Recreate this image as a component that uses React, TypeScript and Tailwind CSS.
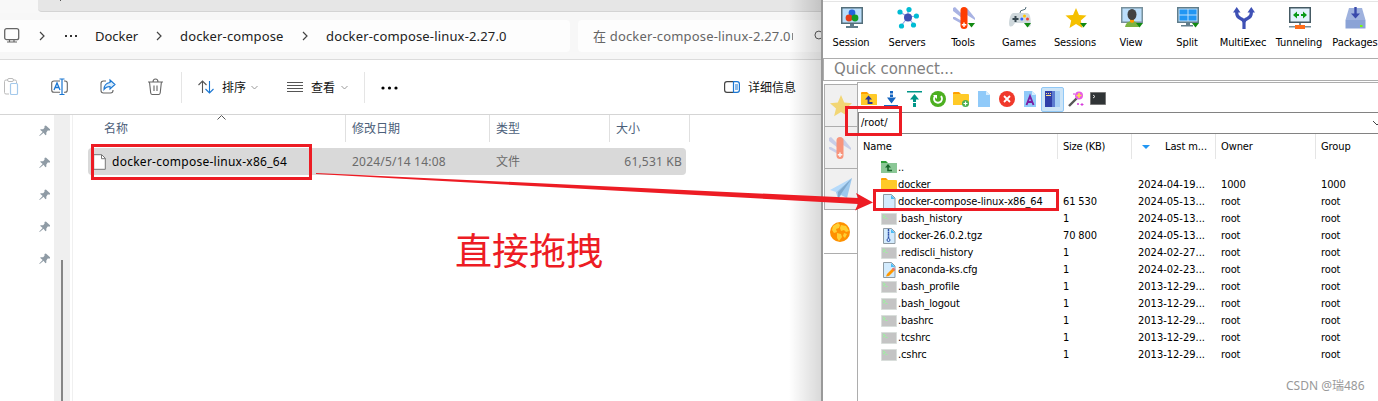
import React from "react";

const SORTS = {
  name: "名称",
  date: "修改日期",
  type: "类型",
  size: "大小",
};

interface RemoteFile {
  icon: "up" | "folder" | "file" | "hidden" | "zip" | "edit";
  name: string;
  size?: string;
  date?: string;
  owner?: string;
  group?: string;
}

const files: RemoteFile[] = [
  { icon: "up", name: ".." },
  { icon: "folder", name: "docker", date: "2024-04-19...", owner: "1000", group: "1000" },
  { icon: "file", name: "docker-compose-linux-x86_64", size: "61 530", date: "2024-05-13...", owner: "root", group: "root" },
  { icon: "hidden", name: ".bash_history", size: "1", date: "2024-05-13...", owner: "root", group: "root" },
  { icon: "zip", name: "docker-26.0.2.tgz", size: "70 800", date: "2024-05-13...", owner: "root", group: "root" },
  { icon: "hidden", name: ".rediscli_history", size: "1", date: "2024-02-27...", owner: "root", group: "root" },
  { icon: "edit", name: "anaconda-ks.cfg", size: "1", date: "2024-02-23...", owner: "root", group: "root" },
  { icon: "hidden", name: ".bash_profile", size: "1", date: "2013-12-29...", owner: "root", group: "root" },
  { icon: "hidden", name: ".bash_logout", size: "1", date: "2013-12-29...", owner: "root", group: "root" },
  { icon: "hidden", name: ".bashrc", size: "1", date: "2013-12-29...", owner: "root", group: "root" },
  { icon: "hidden", name: ".tcshrc", size: "1", date: "2013-12-29...", owner: "root", group: "root" },
  { icon: "hidden", name: ".cshrc", size: "1", date: "2013-12-29...", owner: "root", group: "root" },
];

const FileIcon: React.FC<{ kind: RemoteFile["icon"] }> = ({ kind }) => {
  if (kind === "up") {
    return (
      <svg width="16" height="16" viewBox="0 0 16 16">
        <path d="M0 4V1h5l2 2z" fill="#2f9e3a" />
        <path d="M0 3h16v10H0z" fill="#8bc796" />
        <path d="M7 6v4.500h4" stroke="#17652a" strokeWidth="1.600" fill="none" />
        <path d="M4 7.500L7 4l3 3.500z" fill="#17652a" />
      </svg>
    );
  }
  if (kind === "folder") {
    return (
      <svg width="16" height="16" viewBox="0 0 16 16">
        <path d="M0 4V2q0-1 1-1h4l2 2z" fill="#ffa000" />
        <path d="M0 3h15q1 0 1 1v9q0 1-1 1H1q-1 0-1-1z" fill="#ffca28" />
      </svg>
    );
  }
  if (kind === "hidden") {
    return (
      <svg width="16" height="16" viewBox="0 0 16 16">
        <path d="M.5 2.500h15v11H.5z" fill="#c4c4c4" stroke="#d9dedb" />
        <path d="M2 4l2 1.500L2 7M4.500 7.500h2" stroke="#9df0a0" strokeWidth="1.200" fill="none" />
      </svg>
    );
  }
  return (
    <svg width="16" height="16" viewBox="0 0 16 16">
      <path d="M2.500.5h8l3.500 3.500v11.500h-11.500z" fill="#d3ebfd" stroke="#8f9ba3" />
      <path d="M10 1l4 4h-4z" fill="#4ebdf5" />
      {kind === "zip" && <path d="M7.500 1v9" stroke="#2c4fa8" strokeWidth="1.500" strokeDasharray="2 .4" />}
      {kind === "zip" && <circle cx="7.500" cy="12" r="1.500" fill="none" stroke="#2c4fa8" />}
      {kind === "edit" && <path d="M5 14.500l1-2.500 6-6 2 2-6 6z" fill="#ff9800" />}
      {kind === "edit" && <path d="M11 7l1.500-1.500 2 2L13 9z" fill="#e57373" />}
    </svg>
  );
};

const Chevron: React.FC<{ className: string }> = ({ className }) => (
  <svg width="8" height="12" viewBox="0 0 8 12" className={className}>
    <path d="M2 2l4 4-4 4" fill="none" stroke="#444" strokeWidth="1.200" />
  </svg>
);

const Down: React.FC = () => (
  <svg width="7" height="5" viewBox="0 0 7 5">
    <path d="M.5 1l3 3 3-3" fill="none" stroke="#999" />
  </svg>
);

const Pin: React.FC = () => (
  <svg width="11" height="12" viewBox="0 0 12 12">
    <path d="M6 .5L7.500 0 12 4v1.500H9.500L8 7.500v2.500L7 10.500 5 8 .8 11.500 .3 11 4 7 1.500 5V4H4.500L6 2.500z" fill="#8f9ba5" />
  </svg>
);

const Star: React.FC<{ size: number }> = ({ size }) => (
  <svg width={size} height={size} viewBox="0 0 22 22">
    <path d="M11 0l3.200 7.500 7.800.7-6 5.200 1.900 7.900-6.900-4.300-6.900 4.300L6 13.400 0 8.200l7.800-.7z" fill="#f5c211" />
  </svg>
);

const Knife: React.FC = () => (
  <svg width="22" height="22" viewBox="0 0 22 22">
    <path d="M0 1l2-1 7 7v4L0 4zM0 10l2 0 7 4v3L0 12zM14 1l8 10v2l-8-5z" fill="#a9b3e3" />
    <rect x="7.500" y="0" width="7" height="22" rx="3.500" fill="#ff4a1c" />
    <path d="M11 15.500v4.500M8.800 17.700h4.500" stroke="#fff" strokeWidth="1.400" />
  </svg>
);

const green = <path d="M15 16h7l-3.500 4.500z" fill="#128a12" />;

const tools = [
  {
    label: "Session",
    art: (
      <>
        <path d="M0 0h22v17H0z" fill="#546e7a" />
        <path d="M1.500 1.500h19v14h-19z" fill="#bbdefb" />
        <path d="M9 17h4v3H9zM5 19h12v2H5z" fill="#607d8b" />
        <circle cx="11" cy="6" r="3.400" fill="#2464dc" />
        <circle cx="8" cy="11" r="3.400" fill="#e63d18" />
        <circle cx="14" cy="11" r="3.400" fill="#159c24" />
      </>
    ),
  },
  {
    label: "Servers",
    art: (
      <>
        <path d="M11 10L3 5M11 10l0-8M11 10l9-1M11 10l-7 9M11 10l6 8" stroke="#90a4e8" strokeWidth="1.200" />
        <circle cx="11" cy="10.500" r="4" fill="#3f51b5" />
        <circle cx="3" cy="5" r="2.600" fill="#00bcd4" />
        <circle cx="12" cy="2.600" r="2.600" fill="#00bcd4" />
        <circle cx="19.400" cy="9" r="2.600" fill="#00bcd4" />
        <circle cx="4.500" cy="19" r="2.600" fill="#00bcd4" />
        <circle cx="16.500" cy="18" r="2.600" fill="#00bcd4" />
      </>
    ),
  },
  {
    label: "Tools",
    art: (
      <>
        <path d="M0 1l2-1 7 7v4L0 4zM0 10l2 0 7 4v3L0 12zM14 1l8 10v2l-8-5z" fill="#a9b3e3" />
        <rect x="7.500" y="0" width="7" height="22" rx="3.500" fill="#ff3d00" />
        <path d="M11 15.500v4.500M8.800 17.700h4.500" stroke="#fff" strokeWidth="1.400" />
        {green}
      </>
    ),
  },
  {
    label: "Games",
    art: (
      <>
        <path d="M11 6q0-3 3-3t3-3" stroke="#546e7a" fill="none" />
        <path d="M4 6h14q3 0 3.500 6t0 7q-3 3-5-3H6q-3 5-5.500 3-1-2 0-7T4 6z" fill="#cfd8dc" />
        <path d="M6.500 9v6M3.500 12h6" stroke="#37474f" strokeWidth="2" />
        <circle cx="15.500" cy="9" r="1.500" fill="#ffc400" />
        <circle cx="12.800" cy="12" r="1.500" fill="#2962ff" />
        <circle cx="18.500" cy="12" r="1.500" fill="#f44336" />
        {green}
      </>
    ),
  },
  {
    label: "Sessions",
    art: (
      <>
        <path d="M11 1l3 7 7.500.6-5.700 5 1.700 7.400L11 17l-6.500 4 1.700-7.400-5.700-5L8 8z" fill="#f5c000" />
        {green}
      </>
    ),
  },
  {
    label: "View",
    art: (
      <>
        <path d="M0 0h22v16H0z" fill="#78909c" />
        <path d="M1.500 1.500h19v13h-19z" fill="#bbdefb" />
        <path d="M4 20q1-6 7-6t7 6z" fill="#7cb342" />
        <path d="M9 11h4v4l-2 1-2-1z" fill="#ff9800" />
        <ellipse cx="11" cy="7.500" rx="4.500" ry="5.500" fill="#424242" />
        {green}
      </>
    ),
  },
  {
    label: "Split",
    art: (
      <>
        <path d="M0 0h22v16H0z" fill="#607d8b" />
        <path d="M1.500 1.500h19v13h-19z" fill="#bbdefb" />
        <path d="M2.500 2.500h8v5h-8zM11.500 2.500h8v5h-8zM2.500 8.500h8v5h-8zM11.500 8.500h8v5h-8z" fill="#2196f3" />
        <path d="M9 16h4v2H9zM4 18h12v1.500H4z" fill="#607d8b" />
        {green}
      </>
    ),
  },
  {
    label: "MultiExec",
    art: (
      <>
        <path d="M3.700 4v2q0 4 3.800 5.500T11 16M18.300 4v2q0 4-3.800 5.500T11 16M11 13v9" stroke="#3f51b5" strokeWidth="3.200" fill="none" />
        <path d="M0 5.500L3.700 0 7.500 5.500zM14.500 5.500L18.300 0 22 5.500z" fill="#3f51b5" />
      </>
    ),
  },
  {
    label: "Tunneling",
    art: (
      <>
        <path d="M0 0h22v16H0z" fill="#455a64" />
        <path d="M1.500 1.500h19v13h-19z" fill="#e3f2fd" />
        <path d="M4 8l4-3.500v2.500h2v2H8v2.500zM18 8l-4-3.500v2.500h-2v2h2v2.500z" fill="#0a9b18" />
        <path d="M10 16h2v2h-2zM0 19h22v1.500H0z" fill="#78909c" />
        <path d="M6 18h10v4H6z" fill="#ff6d1a" />
      </>
    ),
  },
  {
    label: "Packages",
    art: (
      <>
        <path d="M4 1h13l3.500 12H.5z" fill="#9fb2de" />
        <path d="M.5 13h20v8.500H.5z" fill="#8ba3d6" />
        <path d="M10.500 0v8" stroke="#3949ab" strokeWidth="2.400" />
        <path d="M6 6.500h9l-4.500 5z" fill="#3949ab" />
        <path d="M15 18h2.500v2H15z" fill="#76ff03" />
      </>
    ),
  },
];

const folder = (
  <>
    <path d="M0 4V2q0-1 1-1h5l2 2z" fill="#ffa000" />
    <path d="M0 3h15q1 0 1 1v10H0z" fill="#ffca28" />
  </>
);

const sheet = (
  <>
    <path d="M2 0h8l4 4v12H2z" fill="#90caf9" />
    <path d="M10 0v4h4z" fill="#d8eefe" />
  </>
);

const actions = [
  <>
    {folder}
    <path d="M7.500 7v5h4" stroke="#283593" strokeWidth="1.800" fill="none" />
    <path d="M4 8.500L7.500 4.500 11 8.500z" fill="#283593" />
  </>,
  <>
    <path d="M7.500 0v9" stroke="#1565c0" strokeWidth="3" strokeDasharray="2.500 1" />
    <path d="M3 6.500h9l-4.500 6zM0 14h14v1.500H0z" fill="#1565c0" />
  </>,
  <>
    <path d="M7.500 7v9" stroke="#009688" strokeWidth="3" strokeDasharray="4 1" />
    <path d="M3 8.500h9L7.500 3zM0 0h15v1.500H0z" fill="#009688" />
  </>,
  <>
    <circle cx="8" cy="8" r="8" fill="#4caf20" />
    <path d="M5 5q-2 3 0 5.500 3 2.500 6 0 2-3 0-5.500" stroke="#fff" strokeWidth="1.800" fill="none" />
    <path d="M3 4h4v4z" fill="#fff" />
  </>,
  <>
    {folder}
    <circle cx="12.500" cy="12.500" r="3.500" fill="#4caf50" />
    <path d="M12.500 10.500v4M10.500 12.500h4" stroke="#fff" strokeWidth="1.200" />
  </>,
  sheet,
  <>
    <circle cx="8" cy="8" r="8" fill="#f0392b" />
    <path d="M5 5l6 6M11 5l-6 6" stroke="#fff" strokeWidth="1.800" />
  </>,
  <>
    {sheet}
    <path d="M4.500 14L8 5l3.500 9M6 11h4" stroke="#7b1fa2" strokeWidth="1.900" fill="none" />
  </>,
  <>
    <path d="M0 0h7v16H0z" fill="#303fa8" />
    <path d="M7 0h3v16H7z" fill="#5c7bd0" />
    <path d="M10 0h5v16h-5z" fill="#a5cdf5" />
    <path d="M1 2h1v1H1zM3 2h1v1H3zM5 2h1v1H5zM1 4h5v1H1z" fill="#ffe082" />
  </>,
  <>
    <path d="M1 15l8-8" stroke="#555" strokeWidth="2.400" />
    <circle cx="11" cy="4.500" r="4" fill="#e65be8" />
    <path d="M11 2v5M8.500 4.500h5" stroke="#ffe14a" strokeWidth="1.500" />
    <path d="M14 12v3M12.500 13.500h3M10 12v2M9 13h2M5 3h2" stroke="#d63bdc" />
  </>,
  <>
    <path d="M.5 1.500h15v12H.5z" fill="#303436" stroke="#777" />
    <path d="M3 4l2 1.500L3 7" stroke="#ddd" fill="none" />
  </>,
];

const Explorer: React.FC = () => (
  <div className="relative flex h-full w-[821px] shrink-0 flex-col overflow-hidden bg-white font-['Noto_Sans','Noto_Sans_CJK_SC',sans-serif] text-[13px] text-[#222]">
    <div className="h-[13px] bg-[#f8f8f8] pl-[38px]">
      <div className="h-3 rounded-bl border-b border-[#d4d4d4] bg-[#e6e6e6] pl-[22px]">
        <div className="h-px w-px bg-[#555]" />
      </div>
    </div>
    <div className="flex h-[47px] border-b border-[#dcdcdc] bg-[#f7f7f7] pt-[7px]">
      <div className="mr-2 flex h-8 w-[570px] items-center rounded-r bg-[#fdfdfd] whitespace-nowrap">
        <svg width="16" height="16" viewBox="0 0 16 16" className="ml-1">
          <rect x=".7" y=".7" width="14" height="11" rx="2" fill="none" stroke="#666" strokeWidth="1.300" />
          <path d="M5.500 12v2M10 12v2M3 14h10" stroke="#666" strokeWidth="1.200" />
        </svg>
        <Chevron className="ml-[18px]" />
        <svg width="12" height="4" viewBox="0 0 12 4" className="mb-px ml-[19px]">
          <path d="M0 1h2v2H0zM5 1h2v2H5zM10 1h2v2h-2z" fill="#333" />
        </svg>
        <span className="ml-[18px] w-[44px] pt-px">Docker</span>
        <Chevron className="ml-4" />
        <span className="ml-[17px] w-[104px] pt-px tracking-[0.14px]">docker-compose</span>
        <Chevron className="ml-[17px]" />
        <span className="ml-[17px] pt-px tracking-[0.16px]">docker-compose-linux-2.27.0</span>
      </div>
      <div className="flex h-8 w-[243px] items-center rounded-l bg-[#fdfdfd] whitespace-nowrap text-[#666]">
        <span className="ml-[15px] w-[203px] overflow-hidden pt-px tracking-[0.17px]">在 docker-compose-linux-2.27.0</span>
        <span className="h-[7px] w-px bg-[#888]" />
        <svg width="8" height="12" viewBox="0 0 8 12" className="ml-5">
          <circle cx="6" cy="5" r="4" fill="none" stroke="#555" />
        </svg>
      </div>
    </div>
    <div className="flex h-[55px] items-center border-b border-[#d5d5d5] text-xs whitespace-nowrap text-[#111]">
      <svg width="16" height="18" viewBox="0 0 16 18" className="ml-[3px]">
        <path d="M6 16H3q-1.500 0-1.500-1.500v-11Q1.500 2 3 2h9q1.500 0 1.500 1.500V5" fill="none" stroke="#bbb" />
        <rect x="4.500" y=".5" width="6" height="3" rx="1.500" fill="#fff" stroke="#bbb" />
        <rect x="7.500" y="5.500" width="7" height="11" rx="1" fill="#fff" stroke="#a4c9eb" strokeWidth="1.200" />
      </svg>
      <svg width="17" height="18" viewBox="0 0 17 18" className="ml-8">
        <path d="M9 3H3Q.7 3 .7 5v7q0 2.300 2.300 2.300h6M13 3h1q2.300 0 2.300 2.300V12q0 2.300-2.300 2.300h-1" fill="none" stroke="#666" strokeWidth="1.100" />
        <path d="M3 12l3-7 3 7M4 9.500h4" fill="none" stroke="#1976d2" strokeWidth="1.300" />
        <path d="M11 1.500v15M8.500 1h5M8.500 16.500h5" stroke="#1976d2" strokeWidth="1.200" />
      </svg>
      <svg width="17" height="18" viewBox="0 0 17 18" className="ml-8">
        <path d="M6 3H3.500Q1 3 1 5.500v7Q1 15 3.500 15h7q2.500 0 2.500-2.500V12" fill="none" stroke="#666" strokeWidth="1.100" />
        <path d="M10 2l5 4.500-5 4.500V8.500q-4 0-6 3 0-6 6-7z" fill="#d8ecfc" stroke="#1976d2" strokeWidth="1.100" />
      </svg>
      <svg width="15" height="18" viewBox="0 0 15 18" className="ml-[31px]">
        <path d="M0 4h15M5 4q0-3 2.500-3T10 4M1.500 4l1.200 11q.3 1.500 1.500 1.500h6.500q1.200 0 1.500-1.500l1.200-11M6 7.500v5.500M9 7.500v5.500" fill="none" stroke="#666" strokeWidth="1.100" />
      </svg>
      <div className="ml-[18px] h-[31px] w-px bg-[#e5e5e5]" />
      <svg width="16" height="14" viewBox="0 0 16 14" className="ml-4">
        <path d="M4.500 13V1M.5 5l4-4 4 4" fill="none" stroke="#555" strokeWidth="1.100" />
        <path d="M11.500 1v12M7.500 9l4 4 4-4" fill="none" stroke="#1976d2" strokeWidth="1.100" />
      </svg>
      <span className="mr-[5px] ml-2 pt-0.5">排序</span>
      <Down />
      <svg width="16" height="12" viewBox="0 0 16 12" className="ml-[29px]">
        <path d="M0 1.500h16M0 4.500h16M0 7.500h16M0 10.500h16" stroke="#555" />
      </svg>
      <span className="mr-[6px] ml-2 pt-0.5">查看</span>
      <Down />
      <div className="ml-4 h-[31px] w-px bg-[#e5e5e5]" />
      <svg width="18" height="4" viewBox="0 0 18 4" className="mt-px ml-4">
        <circle cx="2" cy="2" r="1.600" />
        <circle cx="8.500" cy="2" r="1.600" />
        <circle cx="15" cy="2" r="1.600" />
      </svg>
      <svg width="16" height="12" viewBox="0 0 16 12" className="ml-[325px]">
        <path d="M9 .6H3Q.6.6.6 3v6Q.6 11.400 3 11.400h6" fill="none" stroke="#444" strokeWidth="1.200" />
        <path d="M9.500.6H13q2.400 0 2.400 2.400v6q0 2.400-2.400 2.400H9.500zM11 4h3M11 6h3M11 8h3" fill="none" stroke="#1976d2" strokeWidth="1.200" />
      </svg>
      <span className="ml-2 pt-0.5">详细信息</span>
    </div>
    <div className="flex flex-1">
      <div className="flex w-[54px] flex-col items-end gap-5 pt-[10px] pr-1">
        <Pin />
        <Pin />
        <Pin />
        <Pin />
        <Pin />
      </div>
      <div className="flex w-4 justify-center bg-[#efefef] pt-[145px]">
        <div className="w-0.5 bg-[#868686]" />
      </div>
      <div className="ml-0.5 flex-1 border-l border-[#f0f0f0]">
        <div className="flex h-[27px] items-center pl-[15px] text-xs text-[#4c607a]">
          <div className="flex h-full w-[258px] items-center border-r border-[#e0e0e0] pl-4">
            <span className="w-[113px]">{SORTS.name}</span>
            <svg width="9" height="5" viewBox="0 0 9 5" className="-mt-[22px]">
              <path d="M.5 4.500l4-4 4 4" fill="none" stroke="#555" />
            </svg>
          </div>
          <div className="flex h-full w-36 items-center border-r border-[#e0e0e0] pl-1.5">{SORTS.date}</div>
          <div className="flex h-full w-[120px] items-center border-r border-[#e0e0e0] pl-1.5">{SORTS.type}</div>
          <div className="flex h-full w-20 items-center border-r border-[#e0e0e0] pl-1.5">{SORTS.size}</div>
        </div>
        <div className="mt-1.5 ml-[15px] flex h-[27px] w-[598px] items-center rounded-sm bg-[#d9d9d9] text-xs whitespace-nowrap text-[#6b6b6b]">
          <svg width="13" height="16" viewBox="0 0 13 16" className="ml-[5px]">
            <path d="M.7.700h8l3.600 3.600v11H.7z" fill="#fff" stroke="#777" />
            <path d="M8.500.700v4h4" fill="none" stroke="#777" />
          </svg>
          <span className="ml-1.5 w-60 tracking-[0.26px] text-black">docker-compose-linux-x86_64</span>
          <span className="w-36 tracking-[0.2px]">2024/5/14 14:08</span>
          <span className="w-[120px]">文件</span>
          <span className="w-[66px] text-right tracking-[0.2px]">61,531 KB</span>
        </div>
      </div>
    </div>
    {/* shadow cast by the window on the right */}
    <div className="absolute inset-y-0 right-0 w-8 bg-gradient-to-r from-transparent to-black/15" />
  </div>
);

const Terminal: React.FC = () => (
  <div className="flex h-full w-[557px] shrink-0 flex-col overflow-hidden border-l-2 border-[#999] bg-white font-['DejaVu_Sans_Condensed','DejaVu_Sans',sans-serif] text-[11px] text-black">
    <div className="mt-px flex h-[57px] border-t border-[#e5e5e5] pt-[5px] pl-px">
      {tools.map((tool) => (
        <div key={tool.label} className="flex w-14 shrink-0 flex-col items-center">
          <svg width="22" height="22" viewBox="0 0 22 22">
            {tool.art}
          </svg>
          <span className="mt-1.5 pr-0.5 tracking-[-0.1px] whitespace-nowrap">{tool.label}</span>
        </div>
      ))}
    </div>
    <div className="flex h-[23px] shrink-0 items-center border border-r-0 border-[#adadad] pl-2.5 font-['DejaVu_Sans',sans-serif] text-[15px] tracking-[-0.1px] text-[#808080]">
      Quick connect...
    </div>
    <div className="flex flex-1 pt-px">
      <div className="flex w-[34px] shrink-0 flex-col pt-0.5 pl-px">
        <div className="flex h-[42px] items-center justify-center border-t border-l border-[#adadad] bg-[#f0f0f0]">
          <div className="opacity-55">
            <Star size={22} />
          </div>
        </div>
        <div className="flex h-[42px] items-center justify-center border-t border-l border-[#adadad] bg-[#f0f0f0] pr-0.5">
          <div className="opacity-55">
            <Knife />
          </div>
        </div>
        <div className="flex h-[41px] items-center justify-center border-t border-l border-[#adadad] bg-[#f0f0f0]">
          <svg width="22" height="22" viewBox="0 0 22 22">
            <path d="M22 0L0 12l6 2z" fill="#b5dafa" />
            <path d="M22 0L6 14l2 7 3-4 6 3z" fill="#9dc9ee" />
            <path d="M22 0L8 14v7l3-5z" fill="#7fa9cd" />
          </svg>
        </div>
        <div className="flex h-[45px] items-center justify-center border-t border-b border-[#adadad] pr-0.5">
          <svg width="20" height="20" viewBox="0 0 20 20">
            <circle cx="10" cy="10" r="10" fill="#ff9100" />
            <path d="M3 4l5-3 2 2-1 3-3 1 1 3-3 1-2-3zM11 3l5 1 3 5-3 1-2-2-3 1-1-3zM7 11l4 1 1 3-3 4-2-3zM14 11l3 1-2 4-2-2z" fill="#ffcf33" />
          </svg>
        </div>
      </div>
      <div className="min-w-0 flex-1 border-t border-l border-[#adadad]">
        <div className="flex h-8 items-center">
          {actions.map((art, i) => (
            <div
              key={i}
              className={
                i === 8
                  ? "flex h-[25px] w-[23px] items-center justify-center rounded-xs border border-[#90c8f6] bg-[#cce4f7]"
                  : "flex w-[22.900px] justify-center"
              }
            >
              <svg width="16" height="16" viewBox="0 0 16 16">
                {art}
              </svg>
            </div>
          ))}
        </div>
        <div className="-mt-[3px] flex h-[22px] items-center justify-between border-y border-l border-[#828282] bg-white pl-0.5">
          <span>/root/</span>
          <svg width="6" height="6" viewBox="0 0 6 6">
            <path d="M1 1l4 4 4-4" fill="none" stroke="#444" />
          </svg>
        </div>
        <div className="flex h-[25px] items-center tracking-[-0.1px] whitespace-nowrap">
          <div className="flex h-full w-[200px] items-center border-r border-[#e5e5e5] pt-px pl-[5px]">Name</div>
          <div className="flex h-full w-[74px] items-center border-r border-[#e5e5e5] pt-px pl-[5px] tracking-[-0.25px]">Size (KB)</div>
          <div className="flex h-full w-[84px] items-center border-r border-[#e5e5e5] pt-px pl-2.5">
            <svg width="8" height="4" viewBox="0 0 8 4" className="mr-[15px]">
              <path d="M0 0h8L4 4z" fill="#2196f3" />
            </svg>
            Last m...
          </div>
          <div className="flex h-full w-[100px] items-center border-r border-[#e5e5e5] pt-px pl-[5px]">Owner</div>
          <div className="flex h-full items-center pt-px pl-[5px]">Group</div>
        </div>
        {files.map((file) => (
          <div key={file.name} className="flex h-[17px] items-center tracking-[-0.12px] whitespace-nowrap">
            <div className="flex w-[205px] items-center gap-px pl-[23px]">
              <FileIcon kind={file.icon} />
              <span className="pt-0.5">{file.name}</span>
            </div>
            <span className="w-[75px] pt-0.5">{file.size}</span>
            <span className="w-[83px] pt-0.5 tracking-normal">{file.date}</span>
            <span className="w-[100px] pt-0.5">{file.owner}</span>
            <span className="pt-0.5">{file.group}</span>
          </div>
        ))}
      </div>
    </div>
  </div>
);

export default function App() {
  return (
    <div className="relative flex h-[401px] w-[1378px] overflow-hidden bg-white">
      <Explorer />
      <Terminal />
      {/* annotations drawn over both windows */}
      <div className="absolute top-[144px] left-[91px] h-9 w-[221px] border-3 border-[#ed1c24]" />
      <div className="absolute top-[106px] left-[845px] h-[30px] w-[57px] border-3 border-[#ed1c24]" />
      <div className="absolute top-[189px] left-[873px] h-[22px] w-[186px] border-3 border-[#ed1c24]" />
      <svg width="560" height="42" viewBox="0 0 560 42" className="absolute top-[171px] left-[315px]">
        <path d="M1 2L543 27l-2-5 17 9.500-18 8 3-6.500L1 3z" fill="#ed1c24" />
      </svg>
      <div className="absolute top-[222px] left-[455px] font-['Noto_Sans_CJK_SC',sans-serif] text-[37px] leading-[54px] whitespace-nowrap text-[#ed1c24]">
        直接拖拽
      </div>
      <div className="absolute top-[378px] left-[1286px] font-['Noto_Sans','Noto_Sans_CJK_SC',sans-serif] text-xs leading-4 whitespace-nowrap text-[#999]">
        CSDN @瑞486
      </div>
    </div>
  );
}
